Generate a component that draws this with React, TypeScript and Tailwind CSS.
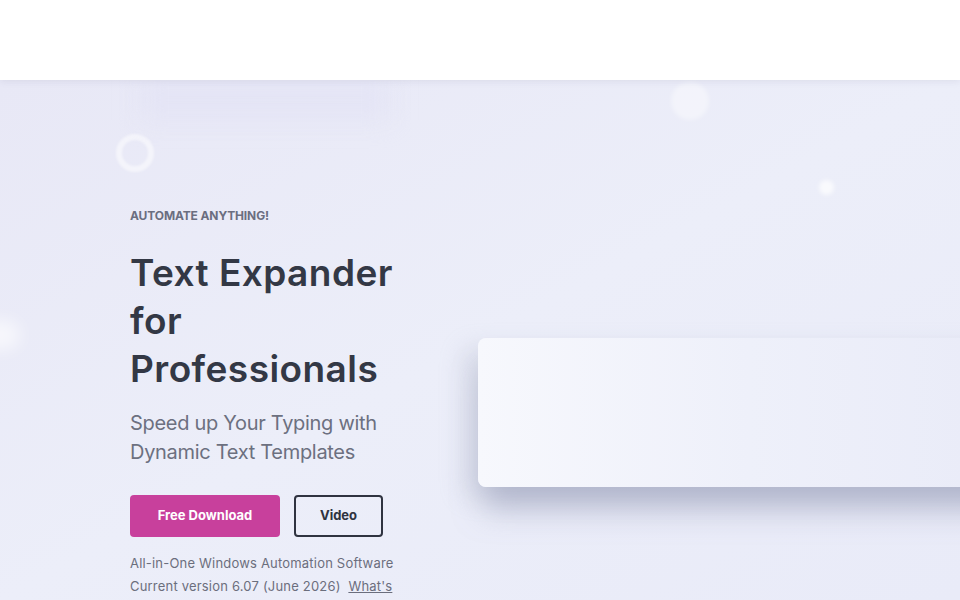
import React from 'react';

const font = { fontFamily: 'Inter, "Noto Sans", sans-serif' };

function Header() {
  return (
    <header className="relative z-20 h-[80px] bg-white shadow-[0_2px_6px_rgba(120,120,160,0.12)]" />
  );
}

function Decorations() {
  return (
    <div className="pointer-events-none absolute inset-0">
      <div className="absolute left-[116px] top-[54px] h-[38px] w-[38px] rounded-full border-[6px] border-white/50 blur-[1px]" />
      <div className="absolute left-[671px] top-[2px] h-[38px] w-[38px] rounded-full bg-white/40 blur-[2px]" />
      <div className="absolute left-[819px] top-[100px] h-[15px] w-[15px] rounded-full bg-white/70 blur-[2px]" />
      <div className="absolute left-[140px] top-0 h-[40px] w-[250px] bg-[#e3e2f5]/70 blur-[12px]" />
      <div className="absolute left-[-30px] top-[240px] h-[30px] w-[50px] rounded-full bg-white/60 blur-[8px]" />
    </div>
  );
}

function HeroText() {
  return (
    <div className="w-[348px] shrink-0 pt-[128px]">
      <p className="text-[12px] font-bold uppercase leading-4 tracking-[-0.01em] text-[#6b6e80]">
        Automate anything!
      </p>
      <h1 className="mt-[25px] text-[37px] font-semibold leading-[48px] tracking-[0.012em] text-[#333845]">
        Text Expander
        <br />
        for
        <br />
        Professionals
      </h1>
      <p className="mt-[16px] text-[20px] font-normal leading-[29px] tracking-[-0.015em] text-[#6c7080]">
        Speed up Your Typing with
        <br />
        Dynamic Text Templates
      </p>
      <div className="mt-[28px] flex gap-[14px]">
        <button className="h-[42px] w-[150px] rounded-[4px] bg-[#c8409c] text-[13px] font-bold text-white">
          Free Download
        </button>
        <button className="h-[42px] w-[89px] rounded-[4px] border-2 border-[#2f3340] text-[13px] font-bold text-[#2f3340]">
          Video
        </button>
      </div>
      <div className="mt-[15px] w-[272px] text-[13px] leading-[23px] tracking-[0.015em] text-[#6b6e7d]">
        <p>All-in-One Windows Automation Software</p>
        <p>
          Current version 6.07 (June 2026)&nbsp;{' '}
          <a href="#" className="underline">What's new?</a>
        </p>
      </div>
    </div>
  );
}

function PreviewCard() {
  return (
    <div className="flex-1 pt-[258px]">
      <div className="-mr-[60px] h-[149px] rounded-[8px] bg-gradient-to-r from-[#f7f8fd] via-[#eef0fa] to-[#e9ebf8] shadow-[0_28px_30px_-6px_rgba(140,145,175,0.5),-14px_10px_24px_rgba(170,175,195,0.3)]" />
    </div>
  );
}

export default function App() {
  return (
    <div className="min-h-screen bg-white" style={font}>
      <Header />
      <section className="relative h-[520px] overflow-hidden bg-gradient-to-br from-[#e8e8f6] via-[#eceef9] to-[#e9ebf8]">
        <Decorations />
        <div className="relative flex pl-[130px]">
          <HeroText />
          <PreviewCard />
        </div>
      </section>
    </div>
  );
}
